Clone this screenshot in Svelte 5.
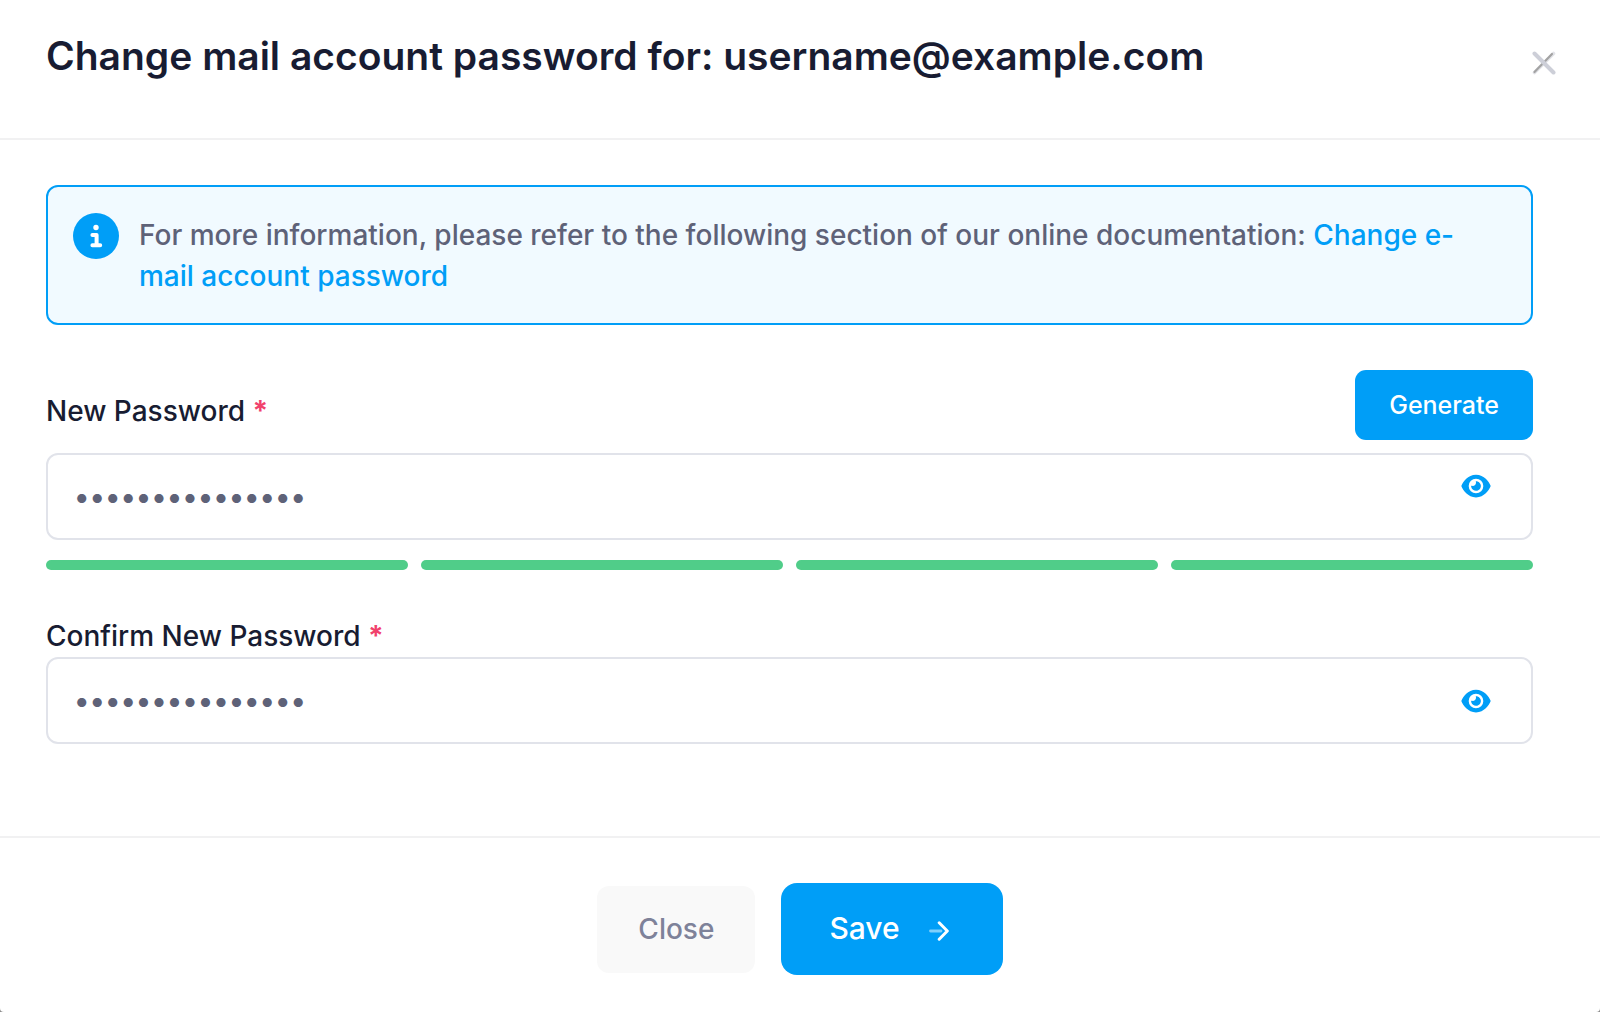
<script lang="ts">
	let password = 'Xk4!pTq9#vLm2Rz';
	let confirmation = 'Xk4!pTq9#vLm2Rz';
	let showPassword = false;
	let showConfirmation = false;

	const strengthSteps = [1, 2, 3, 4];

	function generate() {
		const chars = 'ABCDEFGHJKLMNPQRSTUVWXYZabcdefghijkmnopqrstuvwxyz23456789!#%+';
		const values = crypto.getRandomValues(new Uint32Array(15));
		password = Array.from(values, (v) => chars[v % chars.length]).join('');
		confirmation = password;
	}
</script>

{#snippet eye()}
	<svg viewBox="0 0 576 512" aria-hidden="true">
		<path
			fill="currentColor"
			d="M288 32c-80.8 0-145.5 36.8-192.6 80.6C48.6 156 17.3 208 2.5 243.7c-3.3 7.9-3.3 16.7 0 24.6C17.3 304 48.6 356 95.4 399.4C142.5 443.2 207.2 480 288 480s145.5-36.8 192.6-80.6c46.8-43.5 78.1-95.4 93-131.1c3.3-7.9 3.3-16.7 0-24.6c-14.9-35.7-46.2-87.7-93-131.1C433.5 68.8 368.8 32 288 32zM144 256a144 144 0 1 1 288 0 144 144 0 1 1-288 0zm144-64c0 35.3-28.7 64-64 64c-7.1 0-13.9-1.2-20.3-3.3c-5.5-1.8-11.9 1.6-11.7 7.4c.3 6.9 1.3 13.8 3.2 20.7c13.7 51.2 66.4 81.6 117.6 67.9s81.6-66.4 67.9-117.6c-11.1-41.5-47.8-69.4-88.6-71.1c-5.8-.2-9.2 6.1-7.4 11.7c2.1 6.4 3.3 13.2 3.3 20.3z"
		/>
	</svg>
{/snippet}

<div class="modal" role="dialog" aria-labelledby="modal-title">
	<header>
		<h1 id="modal-title">Change mail account password for: username@example.com</h1>
		<button type="button" class="dismiss" aria-label="Dismiss">
			<svg viewBox="0 0 24 24" fill="none" stroke-linecap="round" aria-hidden="true">
				<path d="M2.5 21.5 21.5 2.5" stroke="#e2e3e8" stroke-width="3.6" />
				<path d="M2.5 21 20 3" stroke="#a3a3a3" stroke-width="2.2" />
				<path d="M2.5 2.5 21.5 21.5" stroke="#cdcfd8" stroke-width="4" />
			</svg>
		</button>
	</header>

	<form id="password-form" on:submit|preventDefault>
		<div class="notice">
			<svg viewBox="0 0 46 46" aria-hidden="true">
				<circle cx="23" cy="23" r="23" fill="#009ef7" />
				<circle cx="23" cy="14.5" r="2.7" fill="#fff" />
				<path d="M19.4 22h4.2v10M19.4 32.3h7.8" fill="none" stroke="#fff" stroke-width="4" stroke-linecap="round" stroke-linejoin="round" />
			</svg>
			<p>
				For more information, please refer to the following section of our online documentation:
				<a href="#docs">Change e-mail account password</a>
			</p>
		</div>

		<div class="label-row">
			<label for="new-password">New Password <span class="required">*</span></label>
			<button type="button" class="generate" on:click={generate}>Generate</button>
		</div>
		<div class="field">
			<input
				id="new-password"
				type={showPassword ? 'text' : 'password'}
				value={password}
				on:input={(e) => (password = e.currentTarget.value)}
				required
			/>
			<button
				type="button"
				class="toggle raised"
				aria-label="Show new password"
				on:click={() => (showPassword = !showPassword)}
			>
				{@render eye()}
			</button>
		</div>
		<div class="strength">
			{#each strengthSteps as step (step)}
				<span></span>
			{/each}
		</div>

		<label for="confirm-password">Confirm New Password <span class="required">*</span></label>
		<div class="field">
			<input
				id="confirm-password"
				type={showConfirmation ? 'text' : 'password'}
				value={confirmation}
				on:input={(e) => (confirmation = e.currentTarget.value)}
				required
			/>
			<button
				type="button"
				class="toggle"
				aria-label="Show confirmed password"
				on:click={() => (showConfirmation = !showConfirmation)}
			>
				{@render eye()}
			</button>
		</div>
	</form>

	<footer>
		<button type="button" class="close">Close</button>
		<button type="submit" form="password-form" class="save">
			Save
			<svg viewBox="0 0 20 20" fill="none" stroke="#fff" stroke-linecap="round" stroke-linejoin="round" aria-hidden="true">
				<path d="M1.5 10H12" stroke-width="2.8" opacity="0.5" />
				<path d="M10.2 1.8 18.3 10l-8.1 8.2" stroke-width="3" />
			</svg>
		</button>
	</footer>
</div>

<style>
	:global(body) {
		margin: 0;
		background-color: #8c8c8c;
		font-family: Inter, 'Liberation Sans', sans-serif;
	}

	.modal {
		box-sizing: border-box;
		min-height: 100vh;
		background-color: #fff;
		border-radius: 0 0 4px 4px;
		color: #181c32;
		font-size: 28px;
		font-weight: 500;
	}

	header {
		display: flex;
		justify-content: space-between;
		align-items: flex-start;
		padding: 32px 44px 58px 46px;
		border-bottom: 2px solid #f1f1f2;
	}

	h1 {
		margin: 0;
		font-size: 39px;
		font-weight: 600;
		line-height: 48px;
	}

	button {
		border: none;
		font-family: inherit;
		font-weight: 500;
		cursor: pointer;
	}

	.dismiss {
		margin-top: 19px;
		padding: 0;
		background: none;
	}

	.dismiss svg {
		display: block;
		width: 24px;
		height: 24px;
	}

	form {
		padding: 45px 67px 92px 46px;
		border-bottom: 2px solid #f1f1f2;
	}

	.notice {
		display: flex;
		align-items: flex-start;
		gap: 20px;
		margin-bottom: 45px;
		padding: 26px 26px 26px 25px;
		border: 2px solid #009ef7;
		border-radius: 12px;
		background-color: #f1faff;
		color: #5e6278;
	}

	.notice svg {
		flex: none;
		width: 46px;
		height: 46px;
	}

	.notice p {
		margin: 2px 0 0;
		line-height: 41px;
	}

	a {
		color: #009ef7;
		text-decoration: none;
	}

	.label-row {
		display: flex;
		justify-content: space-between;
		align-items: center;
		margin-bottom: 13px;
	}

	label {
		display: block;
		line-height: 42px;
	}

	.label-row label {
		padding-top: 12px;
	}

	.required {
		color: #f1416c;
		font-weight: 700;
	}

	.generate {
		padding: 20px 34px;
		border-radius: 11px;
		background-color: #009ef7;
		color: #fff;
		font-size: 25px;
		line-height: 30px;
	}

	.field {
		position: relative;
	}

	input {
		display: block;
		box-sizing: border-box;
		width: 100%;
		height: 87px;
		padding: 0 80px 0 26px;
		border: 2px solid #e1e3ea;
		border-radius: 12px;
		background-color: #fff;
		color: #5e6278;
		font-family: inherit;
		font-size: 29px;
		font-weight: 500;
	}

	input:focus {
		outline: none;
		border-color: #b5b5c3;
	}

	.toggle {
		position: absolute;
		top: 0;
		right: 42px;
		height: 87px;
		padding: 0;
		background: none;
		color: #009ef7;
	}

	.toggle.raised {
		height: 66px;
	}

	.toggle svg {
		display: block;
		width: 30px;
		height: 26px;
	}

	.strength {
		display: flex;
		gap: 13px;
		margin: 20px 0 45px;
	}

	.strength span {
		flex: 1;
		height: 10px;
		border-radius: 5px;
		background-color: #50cd89;
	}

	footer {
		display: flex;
		justify-content: center;
		align-items: center;
		gap: 26px;
		padding: 45px 46px 37px;
	}

	.close {
		padding: 22px 41px;
		border-radius: 12px;
		background-color: #f9f9f9;
		color: #7e8299;
		font-size: 28px;
		line-height: 43px;
	}

	.save {
		display: flex;
		align-items: center;
		gap: 29px;
		padding: 23px 54px 25px 48px;
		border-radius: 16px;
		background-color: #009ef7;
		color: #fff;
		font-size: 30px;
		line-height: 44px;
	}

	.save svg {
		width: 20px;
		height: 20px;
		margin-top: 6px;
	}
</style>
